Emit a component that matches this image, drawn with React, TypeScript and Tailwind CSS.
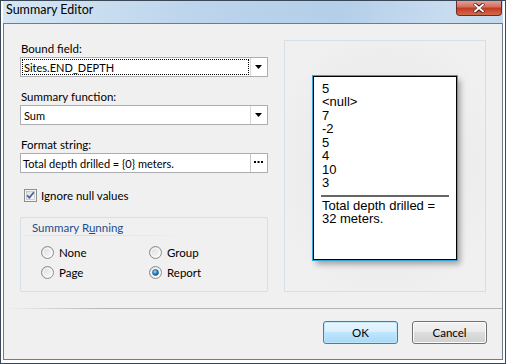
import React from "react";

const ui = { fontFamily: 'Lato, "Segoe UI", sans-serif' };
const arial = { fontFamily: '"Liberation Sans", Arial, sans-serif' };

function Arrow() {
  return (
    <svg width="7" height="4" viewBox="0 0 7 4">
      <path d="M0 0h7L3.5 4z" fill="#000" />
    </svg>
  );
}

function Combo({ value, focused }: { value: string; focused?: boolean }) {
  return (
    <div className="flex h-[20px] border border-[#abadb3] bg-white">
      <div className="flex min-w-0 flex-1 items-center p-px">
        <div
          className={
            "flex h-full w-full items-center px-px text-[11px] leading-none text-black " +
            (focused ? "border border-dotted border-black" : "border border-transparent")
          }
        >
          {value}
        </div>
      </div>
      <div className="flex w-[17px] items-center justify-center border-l border-[#d9d9d9]">
        <Arrow />
      </div>
    </div>
  );
}

function Radio({ label, checked }: { label: string; checked?: boolean }) {
  return (
    <div className="flex h-[13px] items-center gap-[5px]">
      <svg width="13" height="13" viewBox="0 0 13 13">
        <defs>
          <linearGradient id={"rg" + label} x1="0" y1="0" x2="1" y2="1">
            <stop offset="0" stopColor="#d8d8d8" />
            <stop offset="1" stopColor="#fdfdfd" />
          </linearGradient>
          <radialGradient id={"rd" + label} cx="0.4" cy="0.35" r="0.7">
            <stop offset="0" stopColor="#a8dcf6" />
            <stop offset="0.5" stopColor="#2d8fd0" />
            <stop offset="1" stopColor="#0f4d8a" />
          </radialGradient>
        </defs>
        <circle cx="6.5" cy="6.5" r="6" fill={`url(#rg${label})`} stroke="#8c8c8c" />
        <circle cx="6.5" cy="6.5" r="4.2" fill="none" stroke="#ffffff" strokeOpacity="0.7" />
        {checked && <circle cx="6.5" cy="6.5" r="3" fill={`url(#rd${label})`} stroke="#1a4f7f" strokeWidth="0.6" />}
      </svg>
      <span className="text-[11.5px] leading-none text-black">{label}</span>
    </div>
  );
}

export default function App() {
  return (
    <div
      className="h-[364px] w-[506px] overflow-hidden border border-[#3a4756] pb-[3px] pl-[2px] pr-[2px]"
      style={ui}
    >
      <div className="flex h-full flex-col bg-[linear-gradient(100deg,#d6e6f4_0%,#bcd4ec_35%,#b4cfea_60%,#c9dcef_80%,#bcd3ea_100%)]">
        {/* title bar */}
        <div className="relative h-[22px] shrink-0">
          <span className="absolute left-[3px] top-[3px] text-[12.5px] leading-none text-black">Summary Editor</span>
          <div className="absolute -top-px right-[1px] flex h-[16px] w-[46px] items-center justify-center rounded-b-[4px] border border-t-0 border-[#6d2a22] bg-[linear-gradient(#e9a79b_0%,#d4705f_45%,#c23a24_55%,#d56a4c_100%)]">
            <svg width="12" height="10" viewBox="0 0 12 10">
              <path d="M1 0.5l5 4 5-4M1 9.5l5-4 5 4" stroke="#3a1a15" strokeWidth="3.2" fill="none" />
              <path d="M1.3 1l4.7 4 4.7-4M1.3 9l4.7-4 4.7 4" stroke="#fff" strokeWidth="1.8" fill="none" />
            </svg>
          </div>
        </div>

        {/* client area */}
        <div className="flex min-h-0 flex-1 flex-col border border-[#6e7c8c] bg-[#f0f0f0]">
          <div className="flex items-start gap-[16px] px-[16px] pt-[16px]">
            {/* left column */}
            <div className="flex w-[249px] flex-col">
              <div className="flex h-[17px] items-center pl-px text-[11.5px] leading-none text-black">Bound field:</div>
              <Combo value="Sites.END_DEPTH" focused />
              <div className="mt-[11px] flex h-[17px] items-center pl-px text-[11.5px] leading-none text-black">Summary function:</div>
              <Combo value="Sum" />
              <div className="mt-[11px] flex h-[17px] items-center pl-px text-[11.5px] leading-none text-black">Format string:</div>
              <div className="flex h-[20px] border border-[#abadb3] bg-white">
                <div className="flex flex-1 items-center pl-[2px] text-[11px] leading-none text-black">
                  Total depth drilled = {"{0}"} meters.
                </div>
                <div className="flex w-[17px] items-center justify-center border-l border-[#c8c8c8] pb-px">
                  <svg width="9" height="3" viewBox="0 0 9 3">
                    <rect x="0" y="0" width="2" height="2" fill="#000" />
                    <rect x="3.5" y="0" width="2" height="2" fill="#000" />
                    <rect x="7" y="0" width="2" height="2" fill="#000" />
                  </svg>
                </div>
              </div>

              <div className="mt-[16px] flex h-[13px] items-center gap-[4px] pl-[4px]">
                <svg width="13" height="13" viewBox="0 0 13 13">
                  <defs>
                    <linearGradient id="cb" x1="0" y1="0" x2="1" y2="1">
                      <stop offset="0" stopColor="#dcdcdc" />
                      <stop offset="1" stopColor="#fbfbfb" />
                    </linearGradient>
                  </defs>
                  <rect x="0.5" y="0.5" width="12" height="12" fill="#f4f4f4" stroke="#8e8f8f" />
                  <rect x="2.5" y="2.5" width="8" height="8" fill="url(#cb)" stroke="#aeb3b9" strokeWidth="0.6" />
                  <path d="M3.2 6.4l2.2 2.4 4.4-5.6" stroke="#4a5f97" strokeWidth="1.7" fill="none" />
                </svg>
                <span className="text-[11.5px] leading-none text-black">Ignore null values</span>
              </div>

              <div className="mt-[15px] h-[75px] rounded-[2px] border border-[#d5dfe5]">
                <div className="relative h-[18px]">
                  <span className="absolute left-[11px] top-[4px] text-[11.5px] leading-none text-[#1e4e8c]">
                    Summary R<span className="underline">u</span>nning
                  </span>
                  <div className="absolute bottom-0 left-[4px] h-px w-[160px] bg-[linear-gradient(90deg,rgba(0,0,0,0.04),rgba(0,0,0,0.08)_40%,rgba(0,0,0,0))]" />
                </div>
                <div className="mt-[10px] grid grid-cols-[108px_1fr] gap-y-[7px] pl-[20px]">
                  <Radio label="None" />
                  <Radio label="Group" />
                  <Radio label="Page" />
                  <Radio label="Report" checked />
                </div>
              </div>
            </div>

            {/* preview */}
            <div className="flex h-[252px] w-[203px] items-center justify-center border border-[#d5dfe5] bg-[radial-gradient(ellipse_at_center,#e2e2e2_0%,#ebebeb_45%,#f0f0f0_80%)]">
              <div
                className="mt-[3px] flex h-[184px] w-[144px] flex-col border border-black bg-white px-[7px] pt-[5px] text-[13px] leading-[13.5px] text-black shadow-[0_0_0_1px_#3aa4d4,3px_4px_6px_rgba(0,0,0,0.35)]"
                style={arial}
              >
                <div className="pl-px">5</div>
                <div className="pl-px">&lt;null&gt;</div>
                <div className="pl-px">7</div>
                <div className="pl-px">-2</div>
                <div className="pl-px">5</div>
                <div className="pl-px">4</div>
                <div className="pl-px">10</div>
                <div className="pl-px">3</div>
                <div className="mt-[5px] h-[2px] bg-[#666]" />
                <div className="mt-[2px] pl-px">Total depth drilled =</div>
                <div className="pl-px">32 meters.</div>
              </div>
            </div>
          </div>

          <div className="mt-[16px] ml-px h-px bg-[linear-gradient(90deg,rgba(160,160,160,0)_0%,#b5b5b5_20%,#b5b5b5_100%)]" />

          <div className="mt-[12px] flex justify-end gap-[14px] pr-[15px]">
            <div className="flex h-[23px] w-[75px] items-center justify-center rounded-[3px] border border-[#3c7fb1] bg-[linear-gradient(#eaf6fd_0%,#d9f0fc_45%,#bee6fd_50%,#a7d9f5_100%)] text-[11.5px] text-black shadow-[inset_0_0_0_1px_#bfe7fb]">
              OK
            </div>
            <div className="flex h-[23px] w-[75px] items-center justify-center rounded-[3px] border border-[#707070] bg-[linear-gradient(#f2f2f2_0%,#ebebeb_45%,#dddddd_50%,#cfcfcf_100%)] text-[11.5px] text-black shadow-[inset_0_0_0_1px_#fcfcfc]">
              Cancel
            </div>
          </div>
        </div>
      </div>
    </div>
  );
}
